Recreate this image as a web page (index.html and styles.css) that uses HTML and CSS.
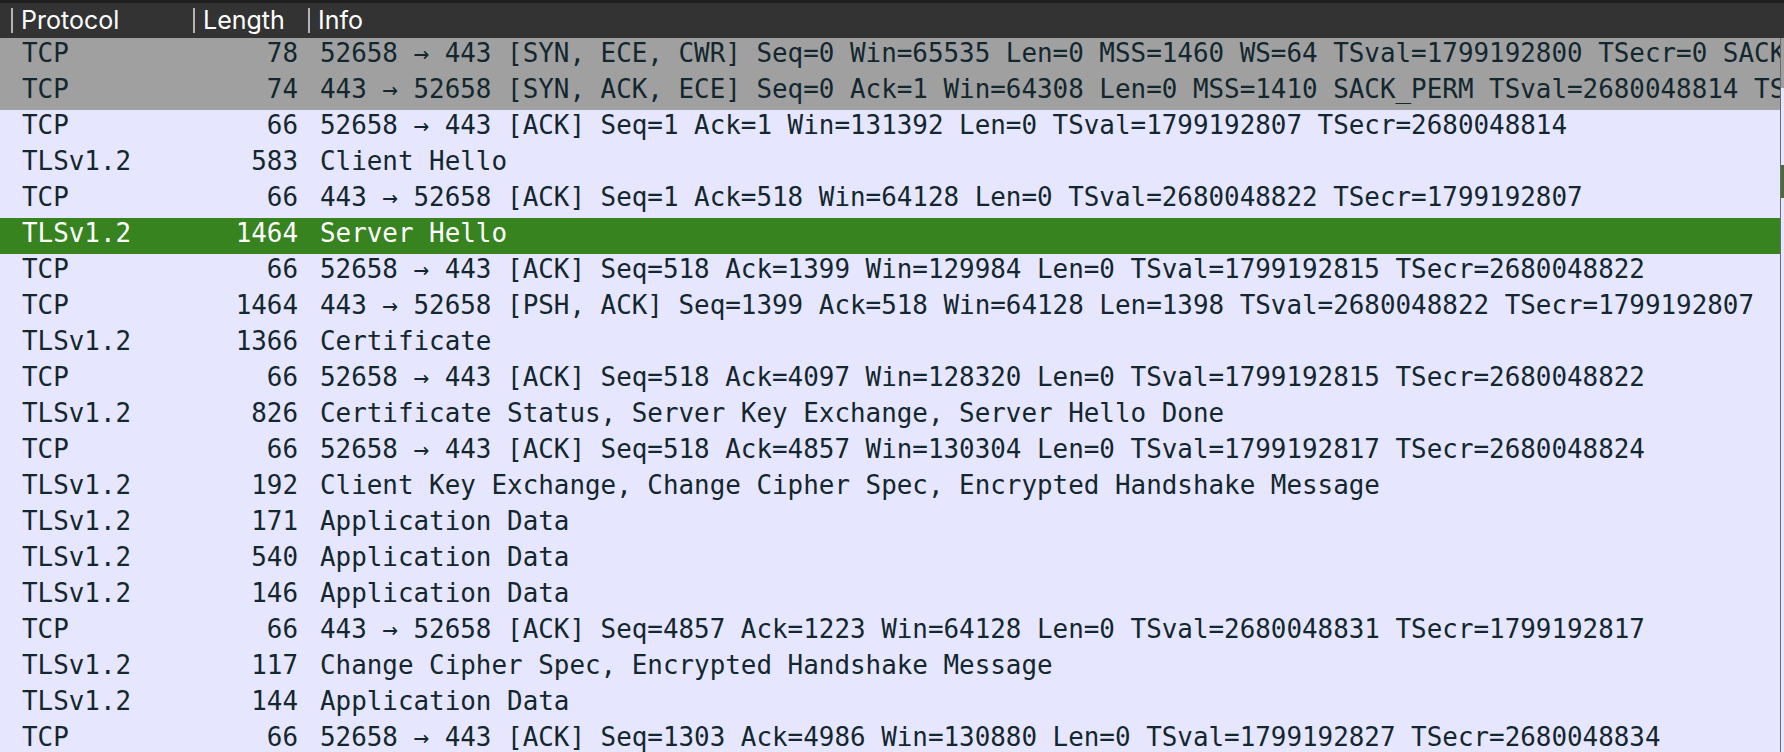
FILE: index.html
```html
<!DOCTYPE html>
<html>
<head>
<meta charset="utf-8">
<link rel="stylesheet" href="styles.css">
</head>
<body>
<div class="app">
  <div class="header">
    <div class="hcell hproto"><span class="sep"></span>Protocol</div>
    <div class="hcell"><span class="sep"></span>Length</div>
    <div class="hcell"><span class="sep"></span>Info</div>
  </div>
  <div class="body">
    <div class="list">
      <div class="row syn"><span class="proto">TCP</span><span class="len">78</span><span class="info">52658 → 443 [SYN, ECE, CWR] Seq=0 Win=65535 Len=0 MSS=1460 WS=64 TSval=1799192800 TSecr=0 SACK_PERM</span></div>
      <div class="row syn"><span class="proto">TCP</span><span class="len">74</span><span class="info">443 → 52658 [SYN, ACK, ECE] Seq=0 Ack=1 Win=64308 Len=0 MSS=1410 SACK_PERM TSval=2680048814 TSecr=1799192800 WS=128</span></div>
      <div class="row"><span class="proto">TCP</span><span class="len">66</span><span class="info">52658 → 443 [ACK] Seq=1 Ack=1 Win=131392 Len=0 TSval=1799192807 TSecr=2680048814</span></div>
      <div class="row"><span class="proto">TLSv1.2</span><span class="len">583</span><span class="info">Client Hello</span></div>
      <div class="row"><span class="proto">TCP</span><span class="len">66</span><span class="info">443 → 52658 [ACK] Seq=1 Ack=518 Win=64128 Len=0 TSval=2680048822 TSecr=1799192807</span></div>
      <div class="row selected"><span class="proto">TLSv1.2</span><span class="len">1464</span><span class="info">Server Hello</span></div>
      <div class="row"><span class="proto">TCP</span><span class="len">66</span><span class="info">52658 → 443 [ACK] Seq=518 Ack=1399 Win=129984 Len=0 TSval=1799192815 TSecr=2680048822</span></div>
      <div class="row"><span class="proto">TCP</span><span class="len">1464</span><span class="info">443 → 52658 [PSH, ACK] Seq=1399 Ack=518 Win=64128 Len=1398 TSval=2680048822 TSecr=1799192807</span></div>
      <div class="row"><span class="proto">TLSv1.2</span><span class="len">1366</span><span class="info">Certificate</span></div>
      <div class="row"><span class="proto">TCP</span><span class="len">66</span><span class="info">52658 → 443 [ACK] Seq=518 Ack=4097 Win=128320 Len=0 TSval=1799192815 TSecr=2680048822</span></div>
      <div class="row"><span class="proto">TLSv1.2</span><span class="len">826</span><span class="info">Certificate Status, Server Key Exchange, Server Hello Done</span></div>
      <div class="row"><span class="proto">TCP</span><span class="len">66</span><span class="info">52658 → 443 [ACK] Seq=518 Ack=4857 Win=130304 Len=0 TSval=1799192817 TSecr=2680048824</span></div>
      <div class="row"><span class="proto">TLSv1.2</span><span class="len">192</span><span class="info">Client Key Exchange, Change Cipher Spec, Encrypted Handshake Message</span></div>
      <div class="row"><span class="proto">TLSv1.2</span><span class="len">171</span><span class="info">Application Data</span></div>
      <div class="row"><span class="proto">TLSv1.2</span><span class="len">540</span><span class="info">Application Data</span></div>
      <div class="row"><span class="proto">TLSv1.2</span><span class="len">146</span><span class="info">Application Data</span></div>
      <div class="row"><span class="proto">TCP</span><span class="len">66</span><span class="info">443 → 52658 [ACK] Seq=4857 Ack=1223 Win=64128 Len=0 TSval=2680048831 TSecr=1799192817</span></div>
      <div class="row"><span class="proto">TLSv1.2</span><span class="len">117</span><span class="info">Change Cipher Spec, Encrypted Handshake Message</span></div>
      <div class="row"><span class="proto">TLSv1.2</span><span class="len">144</span><span class="info">Application Data</span></div>
      <div class="row"><span class="proto">TCP</span><span class="len">66</span><span class="info">52658 → 443 [ACK] Seq=1303 Ack=4986 Win=130880 Len=0 TSval=1799192827 TSecr=2680048834</span></div>
    </div>
    <div class="rule"></div>
    <div class="minimap">
      <div class="mm-syn"></div>
      <div class="mm-gap"></div>
      <div class="mm-sel"></div>
      <div class="mm-rest"></div>
    </div>
  </div>
</div>
</body>
</html>
```
FILE: styles.css
```css
html, body {
  margin: 0;
  padding: 0;
  background: #e7e6ff;
  overflow: hidden;
}
.app {
  width: 1784px;
  height: 752px;
  display: flex;
  flex-direction: column;
  overflow: hidden;
}
.header {
  flex: none;
  height: 35px;
  border-top: 3px solid #1f1f1f;
  background: #333333;
  display: grid;
  grid-template-columns: 193px 115px 1fr;
  font-family: Inter, "Liberation Sans", sans-serif;
  font-size: 25px;
  color: #ffffff;
}
.hcell {
  display: flex;
  align-items: center;
  line-height: 35px;
}
.hproto {
  padding-left: 11px;
}
.sep {
  display: inline-block;
  width: 2px;
  height: 25px;
  background: #b4b4b4;
  margin-right: 8px;
}
.body {
  flex: 1;
  display: flex;
  min-height: 0;
}
.list {
  width: 1780px;
  flex: none;
  overflow: hidden;
  font-family: "DejaVu Sans Mono", "Liberation Mono", monospace;
  font-size: 25.9px;
  color: #12272e;
}
.row {
  display: grid;
  grid-template-columns: 193px 115px 1fr;
  height: 36px;
  line-height: 31px;
  padding-bottom: 5px;
  box-sizing: border-box;
  background: #e7e6ff;
  white-space: pre;
}
.row.syn {
  background: #a0a0a0;
}
.row.selected {
  background: #37831f;
  color: #ffffff;
}
.proto {
  padding-left: 22px;
}
.len {
  text-align: right;
  padding-right: 10px;
}
.info {
  padding-left: 12px;
  overflow: hidden;
}
.rule {
  width: 1px;
  flex: none;
  background: #6a6a6a;
}
.minimap {
  flex: 1;
  display: flex;
  flex-direction: column;
}
.mm-syn {
  height: 50px;
  background: #a0a0a0;
}
.mm-gap {
  height: 77px;
  background: #e7e6ff;
}
.mm-sel {
  height: 33px;
  background: #4c6b3c;
}
.mm-rest {
  flex: 1;
  background: #e7e6ff;
}
```
